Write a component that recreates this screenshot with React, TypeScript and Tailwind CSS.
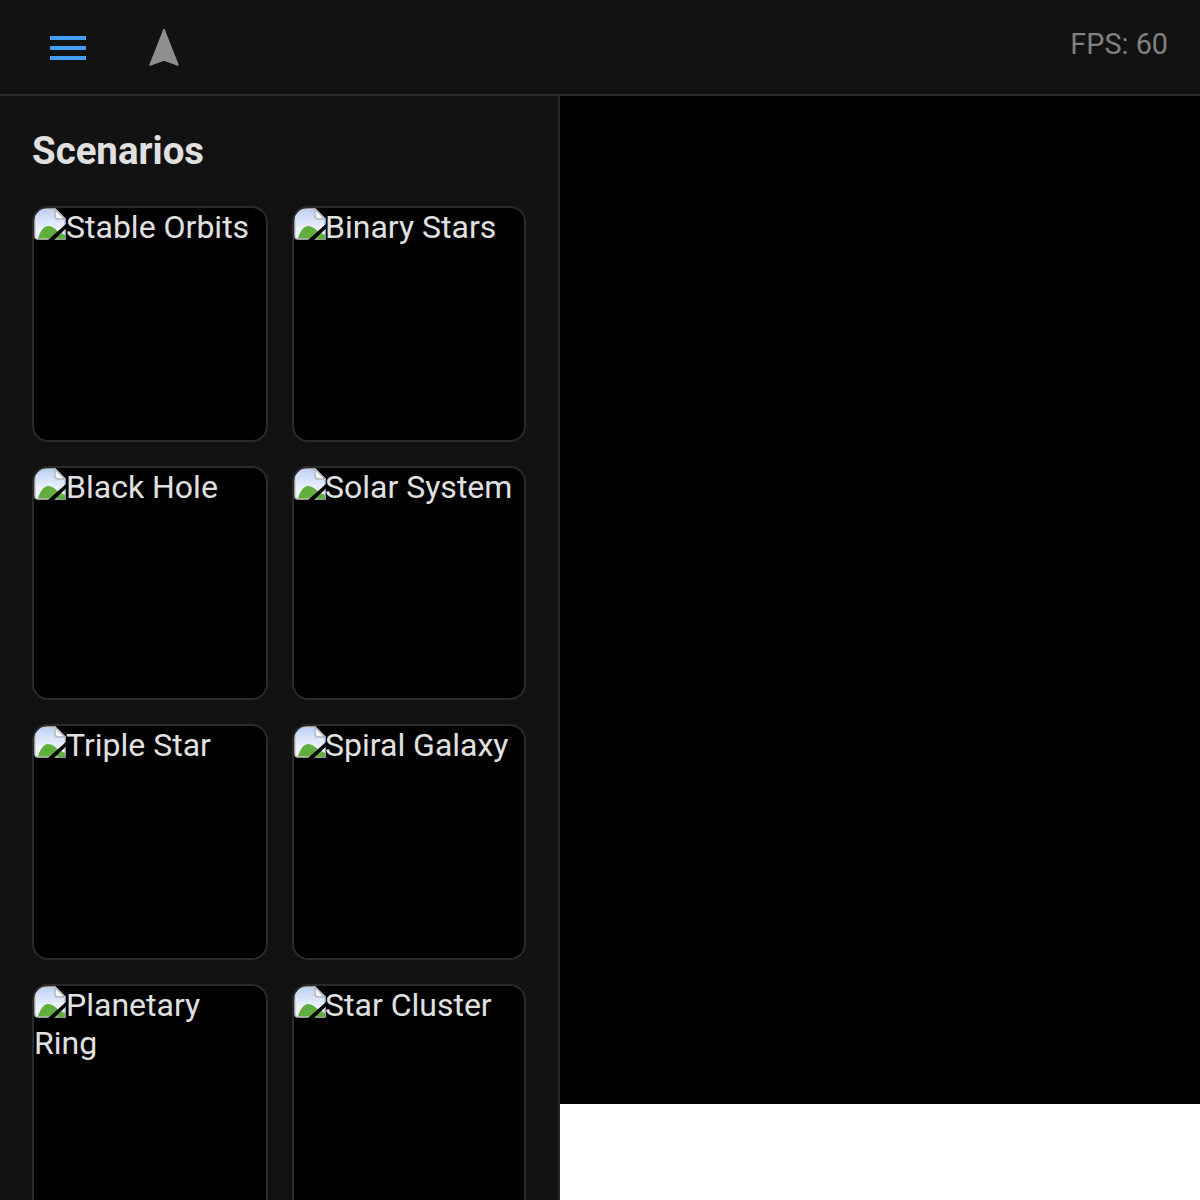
const items = ["Stable Orbits","Binary Stars","Black Hole","Solar System","Triple Star","Spiral Galaxy","Planetary Ring","Star Cluster"];

function Broken({ right }: { right: boolean }) {
  return (
    <svg width="32" height="32" viewBox="0 0 32 32" className={right ? "inline align-[-2px] -mr-[1px]" : "inline align-[-2px]"}>
      <defs>
        <linearGradient id="sky" x1="0" y1="0" x2="0" y2="1">
          <stop offset="0" stopColor="#bcd0f5" />
          <stop offset="0.65" stopColor="#eef3fd" />
        </linearGradient>
      </defs>
      <path d="M4 1H21L31 11V31H4A3 3 0 0 1 1 28V4A3 3 0 0 1 4 1Z" fill="url(#sky)" stroke="#c8cacd" strokeWidth="1.5" />
      <path d="M21 1V8A3 3 0 0 0 24 11H31Z" fill="#f6f6f7" stroke="#b4b6ba" strokeWidth="1.5" />
      <path d="M4 30.5C6 23 10 18 14 18C18 18 22 21 25 25L27 30.5Z" fill="#5fae3e" />
      <path d="M27 25L31 27V31H24Z" fill="#5fae3e" />
      <path d="M14 32L32 16V20.5L20 32Z" fill="#000" />
    </svg>
  );
}

export default function App() {
  return (
    <div className="h-[1200px] w-[1200px] overflow-hidden flex flex-col bg-white font-['Roboto',sans-serif]">
      <header className="h-[96px] shrink-0 bg-[#121212] border-b-2 border-[#2a2a2a] flex items-center justify-between pl-[50px] pr-[32px]">
        <div className="flex items-center gap-[62px]">
          <div className="w-[36px] flex flex-col gap-[6px] mt-[2px]">
            <div className="h-[4px] bg-[#42a0fa]" />
            <div className="h-[4px] bg-[#42a0fa]" />
            <div className="h-[4px] bg-[#42a0fa]" />
          </div>
          <svg width="32" height="40" viewBox="0 0 32 40" className="mt-[2px]">
            <path d="M16 1.5L30 37L16 32L2 37Z" fill="#8f8f8f" stroke="#8f8f8f" strokeWidth="1.5" strokeLinejoin="round" />
          </svg>
        </div>
        <div className="text-[28.8px] leading-[32px] text-[#808080] -mt-[6px]">FPS: 60</div>
      </header>
      <div className="flex flex-1 min-h-0">
        <aside className="w-[560px] shrink-0 bg-[#121212] border-r-2 border-[#2a2a2a] pl-[32px] pr-[32px] overflow-hidden">
          <h2 className="text-[38.4px] leading-[44px] font-bold text-[#e0e0e0] mt-[33px] mb-[33px]">Scenarios</h2>
          <div className="grid grid-cols-[236px_234px] grid-rows-[236px_234px_236px_236px] gap-[24px]">
            {items.map((t, i) => (
              <div key={t} className="bg-black border-2 border-[#2a2a2a] rounded-[16px] overflow-hidden text-[32px] leading-[38px] text-[#e0e0e0]">
                <Broken right={i % 2 === 1} />{t}
              </div>
            ))}
          </div>
        </aside>
        <main className="flex-1 min-w-0 bg-white">
          <div className="h-[1008px] bg-black" />
        </main>
      </div>
    </div>
  );
}
